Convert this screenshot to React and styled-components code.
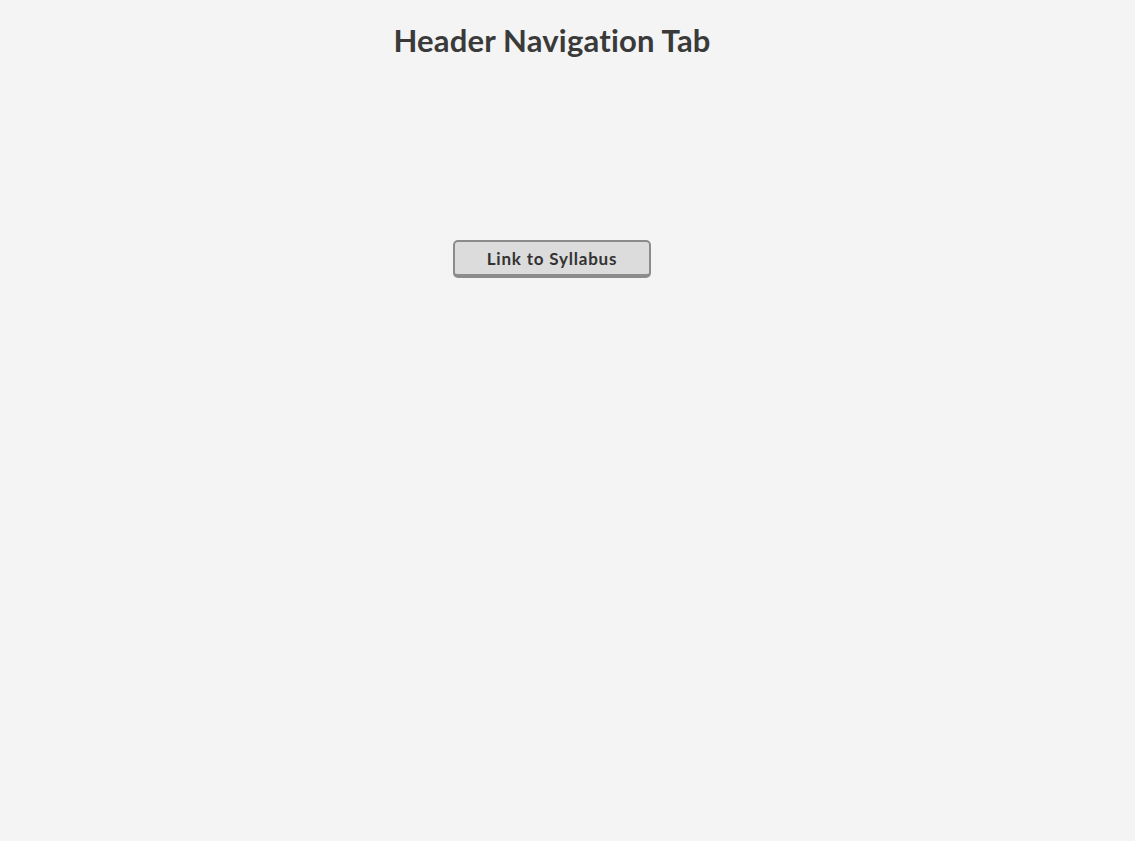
import React from 'react';
import styled, { createGlobalStyle } from 'styled-components';

const GlobalStyle = createGlobalStyle`
  html, body {
    margin: 0;
    padding: 0;
    background: #ffffff;
  }
  body {
    font-family: Lato, "Noto Sans", sans-serif;
  }
`;

const Page = styled.div`
  width: 1104px;
  min-height: 841px;
  padding-right: 31px;
  background: #f4f4f4;
  display: flex;
  flex-direction: column;
  align-items: center;
`;

const Title = styled.h1`
  margin: 22px 0 0;
  font-size: 31px;
  line-height: 36px;
  font-weight: 700;
  letter-spacing: 0.2px;
  color: #3a3a3a;
`;

const SyllabusButton = styled.a`
  margin-top: 182px;
  box-sizing: border-box;
  width: 198px;
  height: 38px;
  display: flex;
  align-items: center;
  justify-content: center;
  background: #dcdcdc;
  border: 2px solid #8c8c8c;
  border-bottom-width: 4px;
  border-radius: 5px;
  color: #333333;
  font-size: 17px;
  font-weight: 700;
  letter-spacing: 0.8px;
  text-decoration: none;
  cursor: pointer;
`;

export default function App() {
  return (
    <>
      <GlobalStyle />
      <Page>
        <Title>Header Navigation Tab</Title>
        <SyllabusButton href="#syllabus">Link to Syllabus</SyllabusButton>
      </Page>
    </>
  );
}
